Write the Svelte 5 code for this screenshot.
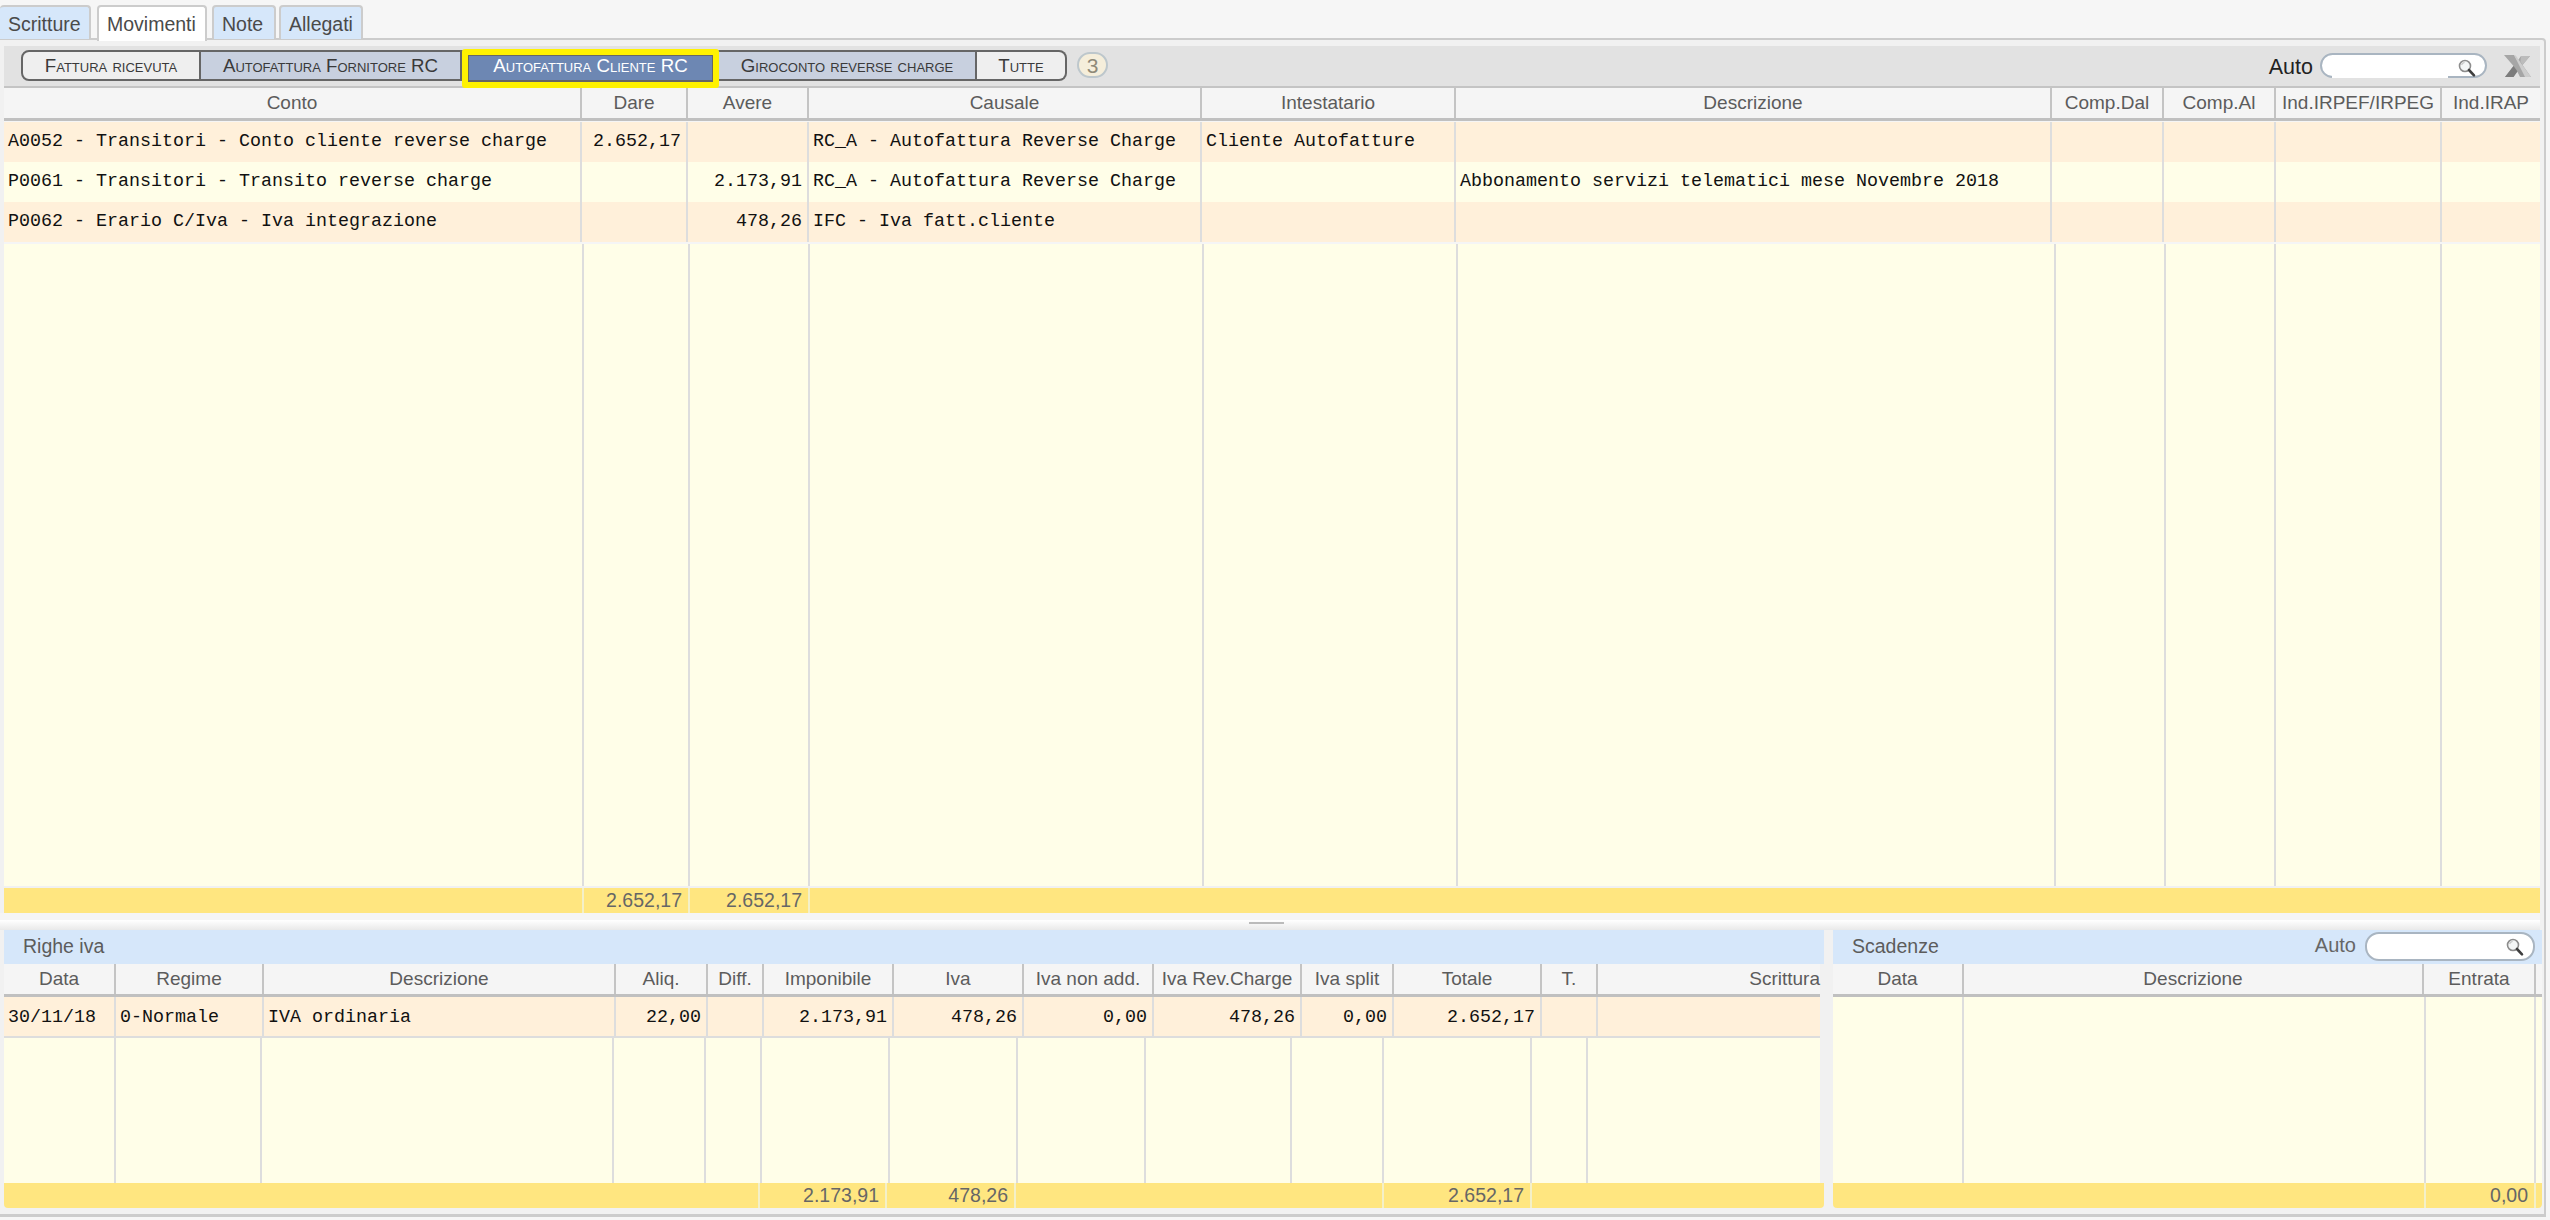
<script>
  const W = (edges, start, end) => {
    const pts = [start, ...edges.map((e) => e + 1), end];
    return pts.slice(1).map((p, i) => `${p - pts[i]}px`).join(' ');
  };

  const main = {
    head: [581, 687, 808, 1201, 1455, 2051, 2163, 2275, 2441],
    body: [583, 689, 809, 1203, 1457, 2055, 2165, 2275, 2441],
    foot: [583, 689, 809]
  };
  const mainLabels = ['Conto', 'Dare', 'Avere', 'Causale', 'Intestatario', 'Descrizione', 'Comp.Dal', 'Comp.Al', 'Ind.IRPEF/IRPEG', 'Ind.IRAP'];
  const mainAlign = ['l', 'r', 'r', 'l', 'l', 'l', 'l', 'l', 'l', 'l'];
  const mainRows = [
    ['A0052 - Transitori - Conto cliente reverse charge', '2.652,17', '', 'RC_A - Autofattura Reverse Charge', 'Cliente Autofatture', '', '', '', '', ''],
    ['P0061 - Transitori - Transito reverse charge', '', '2.173,91', 'RC_A - Autofattura Reverse Charge', '', 'Abbonamento servizi telematici mese Novembre 2018', '', '', '', ''],
    ['P0062 - Erario C/Iva - Iva integrazione', '', '478,26', 'IFC - Iva fatt.cliente', '', '', '', '', '', '']
  ];

  const iva = {
    head: [115, 263, 615, 707, 763, 893, 1023, 1153, 1301, 1393, 1541, 1597],
    body: [115, 261, 613, 705, 761, 889, 1017, 1145, 1291, 1383, 1531, 1587],
    foot: [759, 886, 1015, 1383, 1531]
  };
  const ivaLabels = ['Data', 'Regime', 'Descrizione', 'Aliq.', 'Diff.', 'Imponibile', 'Iva', 'Iva non add.', 'Iva Rev.Charge', 'Iva split', 'Totale', 'T.', 'Scrittura'];
  const ivaAlign = ['l', 'l', 'l', 'r', 'r', 'r', 'r', 'r', 'r', 'r', 'r', 'l', 'l'];
  const ivaRow = ['30/11/18', '0-Normale', 'IVA ordinaria', '22,00', '', '2.173,91', '478,26', '0,00', '478,26', '0,00', '2.652,17', '', ''];
  const ivaFoot = ['', '2.173,91', '478,26', '', '2.652,17', ''];

  const scad = { head: [1963, 2423, 2535], body: [1963, 2425, 2535], foot: [2425, 2535] };
  const segments = [
    { label: 'Fattura ricevuta', cls: 'first light', w: 180 },
    { label: 'Autofattura Fornitore RC', cls: 'blue', w: 261 },
    { label: 'Autofattura Cliente RC', cls: 'active', w: 257 },
    { label: 'Giroconto reverse charge', cls: 'blue', w: 258 },
    { label: 'Tutte', cls: 'last light', w: 90 }
  ];
  const tabs = ['Scritture', 'Movimenti', 'Note', 'Allegati'];
</script>

{#snippet lens()}
  <svg class="lens" width="20" height="20" viewBox="0 0 20 20" aria-hidden="true">
    <circle cx="8" cy="8" r="5.5" fill="#f4f6f6" stroke="#8d8d8d" stroke-width="1.6" />
    <path d="M4.6 7a3.6 3.6 0 0 1 3-2.6" fill="none" stroke="#c8c8c8" stroke-width="1.2" />
    <path d="M12 12l5 5.4" stroke="#3f3f3f" stroke-width="2.6" stroke-linecap="round" />
  </svg>
{/snippet}

{#snippet header(labels, edges, start, end)}
  <div class="row head" style="grid-template-columns:{W(edges, start, end)}">
    {#each labels as l}<div class="cell">{l}</div>{/each}
  </div>
{/snippet}

{#snippet rails(edges, start, end)}
  <div class="rails" style="grid-template-columns:{W(edges, start, end)}">
    {#each [...edges, 0] as _}<div class="rail"></div>{/each}
  </div>
{/snippet}

<div class="app">
  <nav class="tabs">
    {#each tabs as t, i}<div class="tab" class:on={i === 1}>{t}</div>{/each}
  </nav>

  <div class="panel">
    <div class="toolbar">
      <div class="segs">
        {#each segments as s}
          <div class="seg {s.cls}" style="width:{s.w}px">{s.label}</div>
        {/each}
      </div>
      <div class="badge">3</div>
      <div class="spacer"></div>
      <span class="auto">Auto</span>
      <div class="search top">{@render lens()}</div>
      <svg class="xls" width="27" height="22" viewBox="0 0 27 22" aria-hidden="true">
        <path d="M0 0h10l3.5 6L17 1h9l-7.5 9L27 22H16l-3-6-3.5 6H1l8.5-11z" fill="#a6a6a6" />
        <path d="M0 0h10l11 22h6L14 4l-1-2-2-2z" fill="#cdcdcd" />
        <path d="M1 22l8.5-11 4 5.5L9.5 22z" fill="#7c7c7c" />
        <path d="M17 1h9l-7.5 9-2-3.5z" fill="#bcbcbc" />
      </svg>
    </div>

    <section class="grid main">
      {@render header(mainLabels, main.head, 4, 2540)}
      <div class="rows">
        {#each mainRows as r, i}
          <div class="row data" class:odd={i % 2 === 0} style="grid-template-columns:{W(main.head, 4, 2540)}">
            {#each r as c, j}<div class="cell {mainAlign[j]}">{c}</div>{/each}
          </div>
        {/each}
      </div>
      {@render rails(main.body, 4, 2540)}
      <div class="row foot" style="grid-template-columns:{W(main.foot, 4, 2540)}">
        <div class="cell"></div><div class="cell r">2.652,17</div><div class="cell r">2.652,17</div><div class="cell"></div>
      </div>
    </section>

    <div class="split"><i></i></div>

    <div class="lower">
      <section class="grid iva">
        <div class="title">Righe iva</div>
        {@render header(ivaLabels, iva.head, 4, 1820)}
        <div class="row data odd single" style="grid-template-columns:{W(iva.head, 4, 1820)}">
          {#each ivaRow as c, j}<div class="cell {ivaAlign[j]}">{c}</div>{/each}
        </div>
        {@render rails(iva.body, 4, 1820)}
        <div class="row foot" style="grid-template-columns:{W(iva.foot, 4, 1824)}">
          {#each ivaFoot as c}<div class="cell r">{c}</div>{/each}
        </div>
      </section>

      <section class="grid scad">
        <div class="title">
          <span>Scadenze</span>
          <div class="spacer"></div>
          <span class="auto small">Auto</span>
          <div class="search low">{@render lens()}</div>
        </div>
        {@render header(['Data', 'Descrizione', 'Entrata', ''], scad.head, 1833, 2542)}
        {@render rails(scad.body, 1833, 2542)}
        <div class="row foot" style="grid-template-columns:{W(scad.foot, 1833, 2542)}">
          <div class="cell"></div><div class="cell r">0,00</div><div class="cell"></div>
        </div>
      </section>
    </div>
  </div>
</div>

<style>
  :global(body) { margin: 0; background: #f5f5f5; }
  .app {
    width: 2550px; height: 1220px; overflow: hidden; display: flex; flex-direction: column;
    font-family: "Liberation Sans", Arial, sans-serif; color: #555; background: #f6f6f6;
  }
  .tabs { display: flex; height: 33px; padding-top: 5px; flex: none; position: relative; z-index: 1; }
  .tab {
    box-sizing: border-box; height: 34px; padding: 0 8px; margin-right: 4px; line-height: 34px; font-size: 19.5px; color: #4a4a4a;
    background: #d6e7fa; border: 2px solid #ccc; border-bottom: 0; border-radius: 4px 4px 0 0;
  }
  .tab:first-child { border-left: 0; width: 91px; margin-right: 6px; }
  .tab.on { background: #fff; width: 110px; margin-right: 5px; height: 36px; }
  .tab:nth-child(3) { width: 64px; margin-right: 3px; }
  .tab:nth-child(4) { width: 84px; }

  .panel {
    box-sizing: border-box; width: 2546px; height: 1179px; flex: none;
    border: 2px solid #ccc; border-left: 0; border-bottom-width: 3px; border-radius: 0 4px 0 0;
    padding: 6px 0 0 4px; background: #f1f1f1; display: flex; flex-direction: column;
  }
  .toolbar {
    box-sizing: border-box; height: 42px; width: 2536px; flex: none; background: #e2e2e2; border-bottom: 2px solid #c4c4c4;
    display: flex; align-items: flex-start; padding: 4px 9px 0 17px;
  }
  .spacer { flex: 1; }
  .segs { display: flex; height: 31px; }
  .seg {
    box-sizing: border-box; height: 31px; display: flex; align-items: center; justify-content: center;
    font-size: 18.7px; font-variant: small-caps; color: #3a3a3a;
    border: solid #666; border-width: 2px 2px 2px 0; white-space: nowrap;
  }
  .seg.light { background: #efefef; }
  .seg.blue { background: #c8d0df; }
  .seg.first { border-left-width: 2px; border-radius: 8px 0 0 8px; }
  .seg.last { border-radius: 0 8px 8px 0; }
  .seg.active {
    background: #6d87b3; color: #fff; position: relative; z-index: 1; border: 0;
  }
  .seg.active::before {
    content: ""; position: absolute; left: 0; right: 0; top: -1px; bottom: -7px;
    border: 6px solid #fff200; border-radius: 3px; box-shadow: inset 0 0 0 1px #666;
  }
  .seg.active::after {
    content: ""; position: absolute; left: 6px; right: 6px; bottom: -1px; height: 2px; background: #666;
  }
  .badge {
    box-sizing: border-box; width: 31px; height: 26px; margin: 2px 0 0 10px; border-radius: 13px;
    background: #f5eedb; border: 2px solid #bdc7cc; color: #8f8a78; font-size: 21px; line-height: 23px; text-align: center;
  }
  .auto { font-size: 21.5px; color: #222; line-height: 40px; margin-top: -3px; margin-right: 7px; }
  .auto.small { color: #666; font-size: 20px; line-height: 26px; margin: 0 9px 3px 0; }
  .search { box-sizing: border-box; background: #fff; border: 2px solid #a9b5c1; position: relative; flex: none; }
  .search.top { width: 167px; height: 25px; border-radius: 13px; margin: 3px 0 0 0; }
  .search.top::after {
    content: ""; position: absolute; left: 10px; right: 37px; bottom: -2px; height: 2px; background: #fff;
  }
  .search.low { width: 170px; height: 29px; border-radius: 14px; }
  .lens { position: absolute; right: 8px; top: 3px; }
  .xls { margin: 5px 0 0 17px; flex: none; }

  .grid { display: flex; flex-direction: column; flex: none; }
  .main { width: 2536px; }
  .row { display: grid; }
  .cell { box-sizing: border-box; min-width: 0; white-space: nowrap; overflow: hidden; }
  .head { background: #f5f5f5; border-bottom: 3px solid #c0c0c0; flex: none; box-sizing: content-box; height: 30px; }
  .head .cell {
    text-align: center; font-size: 19px; line-height: 30px; color: #5c5c5c; border-right: 2px solid #c4c4c4; overflow: visible;
  }
  .head .cell:last-child { border-right: 0; }
  .main .rows { background: #f5f5f5; padding-top: 1px; padding-bottom: 2px; }
  .data { height: 40px; background: #fffee8; font-family: "Liberation Mono", "Courier New", monospace; font-size: 18.33px; color: #111; }
  .data.odd { background: #fff0da; }
  .data .cell { line-height: 40px; padding: 0 5px 0 4px; border-right: 2px solid #ddd; }
  .data .cell:last-child { border-right: 0; }
  .data .cell.r { text-align: right; }

  .rails { display: grid; background: #fffee8; flex: 1; min-height: 0; }
  .rail { border-right: 2px solid #ddd; }
  .rail:last-child { border-right: 0; }
  .main .rails { flex: none; height: 642px; margin-bottom: 2px; }

  .foot { height: 25px; background: #ffe680; flex: none; font-size: 19.5px; color: #666; }
  .foot .cell { line-height: 25px; border-right: 2px solid #f4f0c8; padding-right: 6px; }
  .foot .cell:last-child { border-right: 0; }
  .foot .cell.r { text-align: right; }

  .split {
    height: 17px; flex: none; width: 2540px; position: relative; display: flex; justify-content: center;
    background: linear-gradient(#f5f5f5 0 7px, #fff 7px, #e9e9e9 17px); margin-left: -4px;
  }
  .split i { display: block; width: 35px; height: 2px; background: #bbb; margin-top: 9px; margin-left: -7px; }

  .lower { display: flex; height: 278px; flex: none; gap: 9px; }
  .title {
    height: 34px; background: #d6e7fa; flex: none; display: flex; align-items: center; padding: 0 5px 1px 19px;
    box-sizing: border-box; font-size: 19.5px; color: #5c5c5c;
  }
  .iva { width: 1820px; }
  .scad { width: 709px; }
  .scad .title { padding-right: 7px; }
  .scad .head { width: 709px; }
  .iva .head { width: 1816px; }
  .iva .head .cell:last-child { text-align: right; }
  .iva .rails { width: 1816px; }
  .iva .foot { width: 1820px; }
  .single { height: 39px; border-bottom: 2px solid #ddd; box-sizing: content-box; width: 1816px; flex: none; }
  .single .cell { line-height: 42px; }
  .scad .rails { width: 709px; }
  .grid.iva, .grid.scad { height: 278px; border-radius: 0 0 4px 4px; overflow: hidden; }
</style>
